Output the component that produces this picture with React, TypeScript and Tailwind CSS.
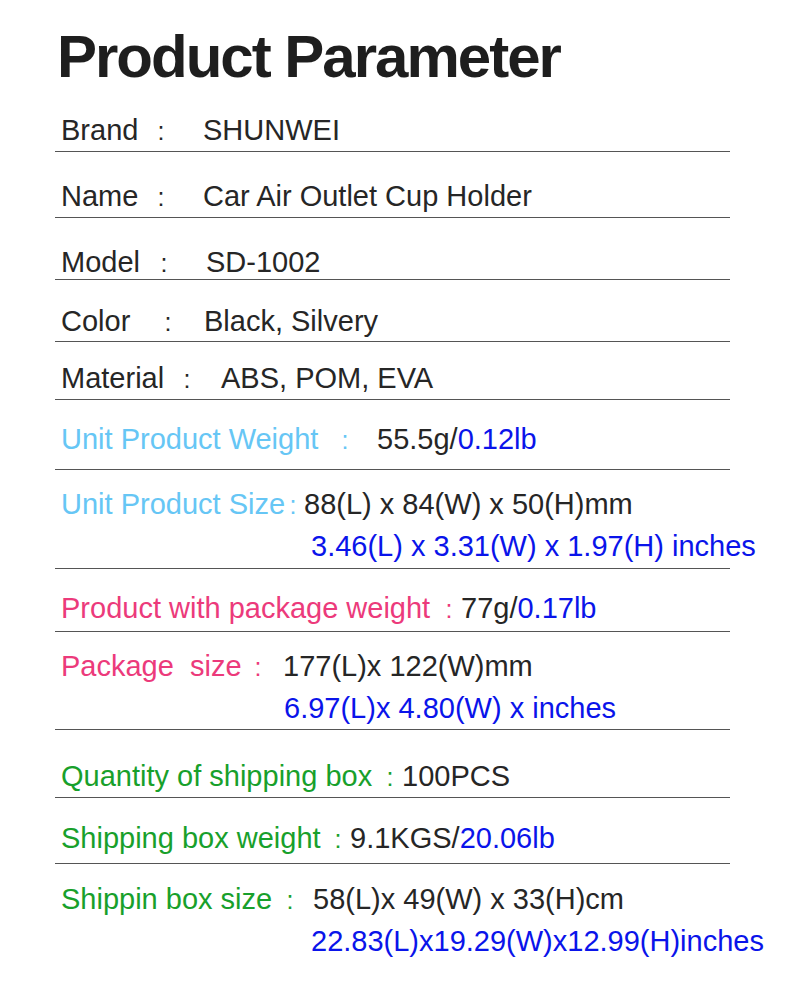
import React from "react";

function Colon({ w, color }: { w: string; color: string }) {
  return (
    <span className={`${w} ${color} flex shrink-0 justify-center text-[25px] leading-[20px]`}>:</span>
  );
}

export default function App() {
  return (
    <div className="w-[790px] h-[981px] bg-white overflow-hidden font-['Liberation_Sans',Arial,sans-serif] text-[29px] text-[#262626]">
      <div className="h-[113px] pl-[57px] pt-[25px]">
        <h1 className="text-[60px] font-bold leading-[64px] tracking-[-2px] text-[#1e1e1e]">Product Parameter</h1>
      </div>

      <div className="ml-[55px] w-[675px]">
        {/* Brand */}
        <div className="border-b border-[#555] pb-[4px] pl-[6px]">
          <div className="flex items-baseline leading-[34px] whitespace-pre">
            <span className="w-[90px] shrink-0">Brand</span>
            <Colon w="w-[20px]" color="text-[#262626]" />
            <span className="ml-[32px]">SHUNWEI</span>
          </div>
        </div>

        {/* Name */}
        <div className="border-b border-[#555] pt-[27px] pb-[4px] pl-[6px]">
          <div className="flex items-baseline leading-[34px] whitespace-pre">
            <span className="w-[90px] shrink-0">Name</span>
            <Colon w="w-[20px]" color="text-[#262626]" />
            <span className="ml-[32px]">Car Air Outlet Cup Holder</span>
          </div>
        </div>

        {/* Model */}
        <div className="border-b border-[#555] pt-[27px] pl-[6px]">
          <div className="flex items-baseline leading-[34px] whitespace-pre">
            <span className="w-[93px] shrink-0">Model</span>
            <Colon w="w-[20px]" color="text-[#262626]" />
            <span className="ml-[32px]">SD-1002</span>
          </div>
        </div>

        {/* Color */}
        <div className="border-b border-[#555] pt-[24px] pb-[3px] pl-[6px]">
          <div className="flex items-baseline leading-[34px] whitespace-pre">
            <span className="w-[97px] shrink-0">Color</span>
            <Colon w="w-[20px]" color="text-[#262626]" />
            <span className="ml-[26px]">Black, Silvery</span>
          </div>
        </div>

        {/* Material */}
        <div className="border-b border-[#555] pt-[19px] pb-[4px] pl-[6px]">
          <div className="flex items-baseline leading-[34px] whitespace-pre">
            <span className="w-[116px] shrink-0">Material</span>
            <Colon w="w-[20px]" color="text-[#262626]" />
            <span className="ml-[24px]">ABS, POM, EVA</span>
          </div>
        </div>

        {/* Unit Product Weight */}
        <div className="border-b border-[#555] pt-[22px] pb-[13px] pl-[6px]">
          <div className="flex items-baseline leading-[34px] whitespace-pre">
            <span className="w-[274px] shrink-0 text-[#66c6f5]">Unit Product Weight</span>
            <Colon w="w-[20px]" color="text-[#66c6f5]" />
            <span className="ml-[22px]">
              55.5g/<span className="text-[#0a14ea]">0.12lb</span>
            </span>
          </div>
        </div>

        {/* Unit Product Size */}
        <div className="border-b border-[#555] pt-[17px] pb-[5px] pl-[6px]">
          <div className="flex flex-col gap-[8px] leading-[34px] whitespace-pre">
            <div className="flex items-baseline">
              <span className="shrink-0 text-[#66c6f5]">Unit Product Size</span>
              <span className="ml-[2px] flex w-[12px] shrink-0 justify-center text-[25px] leading-[20px] text-[#66c6f5]">:</span>
              <span className="ml-[5px]">88(L) x 84(W) x 50(H)mm</span>
            </div>
            <div className="pl-[250px] text-[#0a14ea]">3.46(L) x 3.31(W) x 1.97(H) inches</div>
          </div>
        </div>

        {/* Product with package weight */}
        <div className="border-b border-[#555] pt-[22px] pb-[6px] pl-[6px]">
          <div className="flex items-baseline leading-[34px] whitespace-pre">
            <span className="w-[382px] shrink-0 text-[#ec3a7b]">Product with package weight</span>
            <Colon w="w-[12px]" color="text-[#ec3a7b]" />
            <span className="ml-[6px]">
              77g/<span className="text-[#0a14ea]">0.17lb</span>
            </span>
          </div>
        </div>

        {/* Package size */}
        <div className="border-b border-[#555] pt-[17px] pb-[4px] pl-[6px]">
          <div className="flex flex-col gap-[8px] leading-[34px] whitespace-pre">
            <div className="flex items-baseline">
              <span className="w-[191px] shrink-0 text-[#ec3a7b]">Package  size</span>
              <Colon w="w-[12px]" color="text-[#ec3a7b]" />
              <span className="ml-[19px]">177(L)x 122(W)mm</span>
            </div>
            <div className="pl-[223px] text-[#0a14ea]">6.97(L)x 4.80(W) x inches</div>
          </div>
        </div>

        {/* Quantity of shipping box */}
        <div className="border-b border-[#555] pt-[29px] pb-[4px] pl-[6px]">
          <div className="flex items-baseline leading-[34px] whitespace-pre">
            <span className="w-[323px] shrink-0 text-[#18a02b]">Quantity of shipping box</span>
            <Colon w="w-[12px]" color="text-[#18a02b]" />
            <span className="ml-[6px]">100PCS</span>
          </div>
        </div>

        {/* Shipping box weight */}
        <div className="border-b border-[#555] pt-[23px] pb-[8px] pl-[6px]">
          <div className="flex items-baseline leading-[34px] whitespace-pre">
            <span className="w-[271px] shrink-0 text-[#18a02b]">Shipping box weight</span>
            <Colon w="w-[12px]" color="text-[#18a02b]" />
            <span className="ml-[6px]">
              9.1KGS/<span className="text-[#0a14ea]">20.06lb</span>
            </span>
          </div>
        </div>

        {/* Shippin box size */}
        <div className="pt-[18px] pl-[6px]">
          <div className="flex flex-col gap-[8px] leading-[34px] whitespace-pre">
            <div className="flex items-baseline">
              <span className="w-[223px] shrink-0 text-[#18a02b]">Shippin box size</span>
              <Colon w="w-[12px]" color="text-[#18a02b]" />
              <span className="ml-[17px]">58(L)x 49(W) x 33(H)cm</span>
            </div>
            <div className="pl-[250px] text-[#0a14ea]">22.83(L)x19.29(W)x12.99(H)inches</div>
          </div>
        </div>
      </div>
    </div>
  );
}
